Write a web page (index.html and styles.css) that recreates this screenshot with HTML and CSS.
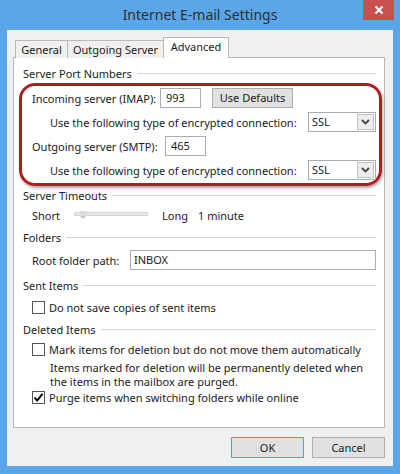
FILE: index.html
```html
<!DOCTYPE html>
<html lang="en">
<head>
  <meta charset="UTF-8">
  <title>Internet E-mail Settings</title>
  <link rel="stylesheet" href="styles.css">
</head>
<body>
  <div class="window">
    <!-- Barra de título -->
    <div class="titlebar">
      <span class="title">Internet E-mail Settings</span>
      <span class="close">
        <svg width="10" height="10" viewBox="0 0 10 10"><path d="M1.5 1.5L8.5 8.5M8.5 1.5L1.5 8.5" stroke="#fff" stroke-width="2"/></svg>
      </span>
    </div>

    <div class="dialog">
      <!-- Pestañas -->
      <div class="tabs">
        <div class="tab general">General</div>
        <div class="tab outgoing">Outgoing Server</div>
        <div class="tab active">Advanced</div>
      </div>

      <div class="panel">
        <div class="group-title"><span>Server Port Numbers</span></div>
        <div class="highlight">
          <div class="row">
            <span class="label imap">Incoming server (IMAP):</span>
            <span class="textbox port">993</span>
            <span class="button defaults">Use Defaults</span>
          </div>
          <div class="row indent">
            <span>Use the following type of encrypted connection:</span>
            <span class="select">SSL
              <span class="arrow"><svg width="9" height="6" viewBox="0 0 9 6"><path d="M1 1L4.5 4.5L8 1" fill="none" stroke="#444" stroke-width="1.8"/></svg></span>
            </span>
          </div>
          <div class="row">
            <span class="label smtp">Outgoing server (SMTP):</span>
            <span class="textbox port">465</span>
          </div>
          <div class="row indent">
            <span>Use the following type of encrypted connection:</span>
            <span class="select">SSL
              <span class="arrow"><svg width="9" height="6" viewBox="0 0 9 6"><path d="M1 1L4.5 4.5L8 1" fill="none" stroke="#444" stroke-width="1.8"/></svg></span>
            </span>
          </div>
        </div>

        <div class="group-title timeouts"><span>Server Timeouts</span></div>
        <div class="row slider-row">
          <span class="short">Short</span>
          <span class="track"><span class="thumb"></span></span>
          <span class="long">Long</span>
          <span>1 minute</span>
        </div>

        <div class="group-title folders"><span>Folders</span></div>
        <div class="row root-row">
          <span class="label root">Root folder path:</span>
          <span class="textbox path">INBOX</span>
        </div>

        <div class="group-title sent"><span>Sent Items</span></div>
        <div class="check-row sent-row">
          <span class="checkbox"></span>
          <span>Do not save copies of sent items</span>
        </div>

        <div class="group-title deleted"><span>Deleted Items</span></div>
        <div class="check-row mark-row">
          <span class="checkbox"></span>
          <span>Mark items for deletion but do not move them automatically</span>
        </div>
        <p class="note">Items marked for deletion will be permanently deleted when<br>the items in the mailbox are purged.</p>
        <div class="check-row purge-row">
          <span class="checkbox checked">
            <svg width="11" height="11" viewBox="0 0 11 11"><path d="M1.5 5.5L4.2 8.5L9.5 1.8" fill="none" stroke="#000" stroke-width="2"/></svg>
          </span>
          <span>Purge items when switching folders while online</span>
        </div>
      </div>

      <!-- Botones -->
      <div class="actions">
        <span class="button ok">OK</span>
        <span class="button">Cancel</span>
      </div>
    </div>
  </div>
</body>
</html>
```

FILE: styles.css
```css
/* Estilos Globales */
body {
  margin: 0;
  padding: 0;
  background-color: #5aa6e9;
  font-family: "Noto Sans", "Open Sans", sans-serif;
  font-size: 11px;
  color: #1a1a1a;
  white-space: nowrap;
}

.window {
  width: 400px;
  height: 474px;
  padding: 0 7px 8px 7px;
  box-sizing: border-box;
}

/* Barra de título */
.titlebar {
  position: relative;
  height: 30px;
  line-height: 30px;
  text-align: center;
}
.title {
  font-size: 14px;
  color: #2e2e2e;
}
.close {
  position: absolute;
  top: 0;
  right: -1px;
  width: 31px;
  height: 20px;
  background-color: #c8504f;
  display: flex;
  align-items: center;
  justify-content: center;
}

/* Diálogo */
.dialog {
  height: 436px;
  background-color: #f0f0f0;
  padding: 7px 8px 0 6px;
  box-sizing: border-box;
}

/* Pestañas */
.tabs {
  display: flex;
  align-items: flex-end;
  height: 21px;
  padding-left: 2px;
  margin-bottom: -1px;
}
.tab {
  height: 18px;
  line-height: 17px;
  border: 1px solid #b9b9b9;
  border-bottom: none;
  background-color: #f0f0f0;
  text-align: center;
  box-sizing: border-box;
}
.tab.general {
  width: 53px;
}
.tab.outgoing {
  width: 97px;
  margin-left: -1px;
}
.tab.active {
  position: relative;
  z-index: 1;
  width: 66px;
  height: 21px;
  line-height: 18px;
  margin-left: -1px;
  background-color: #fff;
}

.panel {
  height: 371px;
  background-color: #fff;
  border: 1px solid #b9b9b9;
  padding: 8px 8px 0 9px;
  box-sizing: border-box;
}

.group-title {
  display: flex;
  align-items: center;
  height: 15px;
  line-height: 15px;
}
.group-title::after {
  content: "";
  flex: 1;
  height: 1px;
  margin-left: 5px;
  background-color: #d5d5d5;
}

/* Recuadro rojo */
.highlight {
  margin: 2px -6px 0 -4px;
  padding: 2px 3px 3px 10px;
  border: 3px solid #b31b21;
  border-radius: 16px;
  box-shadow: 1px 2px 3px rgba(0,0,0,0.35);
  display: flex;
  flex-direction: column;
  gap: 4px;
}

.row {
  display: flex;
  align-items: center;
  height: 20px;
}
.row > * {
  flex-shrink: 0;
}
.row.indent {
  padding-left: 18px;
}
.label.imap {
  width: 128px;
}
.label.smtp {
  width: 133px;
}
.label.root {
  width: 98px;
}

.textbox {
  height: 20px;
  line-height: 18px;
  border: 1px solid #abadb3;
  background-color: #fff;
  box-sizing: border-box;
}
.textbox.port {
  width: 41px;
  padding-left: 5px;
}
.textbox.path {
  width: 246px;
  padding-left: 3px;
}

.button {
  height: 20px;
  line-height: 18px;
  border: 1px solid #adadad;
  background-color: #e1e1e1;
  text-align: center;
  box-sizing: border-box;
}
.button.defaults {
  width: 81px;
  margin-left: 11px;
}

.select {
  margin-left: auto;
  width: 68px;
  height: 20px;
  line-height: 18px;
  border: 1px solid #abadb3;
  padding-left: 3px;
  box-sizing: border-box;
  display: flex;
  align-items: center;
  justify-content: space-between;
}
.arrow {
  width: 17px;
  height: 16px;
  margin-right: 1px;
  border: 1px solid #c3c3c3;
  background-color: #ececec;
  box-sizing: border-box;
  display: flex;
  align-items: center;
  justify-content: center;
}

/* Tiempo de espera */
.group-title.timeouts {
  margin-top: 2px;
}
.slider-row {
  margin-top: 2px;
  padding-left: 9px;
}
.short {
  width: 42px;
}
.track {
  position: relative;
  width: 74px;
  height: 4px;
  margin-top: -3px;
  background-color: #e7e7e7;
  border: 1px solid #d6d6d6;
  box-sizing: border-box;
}
.thumb {
  position: absolute;
  left: 5px;
  top: -2px;
  width: 7px;
  height: 5px;
  background-color: #dadada;
}
.thumb::after {
  content: "";
  position: absolute;
  left: 0;
  top: 5px;
  border-left: 3.5px solid transparent;
  border-right: 3.5px solid transparent;
  border-top: 3px solid #c4c4c4;
}
.long {
  width: 36px;
  margin-left: 14px;
}

/* Carpetas */
.group-title.folders {
  margin-top: 5px;
}
.root-row {
  margin-top: 5px;
  padding-left: 9px;
}

/* Elementos enviados y eliminados */
.group-title.sent {
  margin-top: 8px;
}
.group-title.deleted {
  margin-top: 7px;
}
.check-row {
  display: flex;
  align-items: center;
  height: 15px;
  line-height: 15px;
  padding-left: 9px;
}
.sent-row {
  margin-top: 7px;
}
.mark-row {
  margin-top: 5px;
}
.purge-row {
  margin-top: 1px;
}
.checkbox {
  width: 13px;
  height: 13px;
  margin-right: 4px;
  border: 1px solid #555;
  background-color: #fff;
  box-sizing: border-box;
  display: flex;
  align-items: center;
  justify-content: center;
}
.note {
  margin: 4px 0 0 27px;
  line-height: 14px;
}

/* Botones inferiores */
.actions {
  display: flex;
  justify-content: flex-end;
  gap: 8px;
  margin-top: 9px;
  padding-right: 0;
}
.actions .button {
  width: 73px;
  height: 21px;
  line-height: 19px;
}
.actions .button.ok {
  border-color: #4aa0e6;
}
```
